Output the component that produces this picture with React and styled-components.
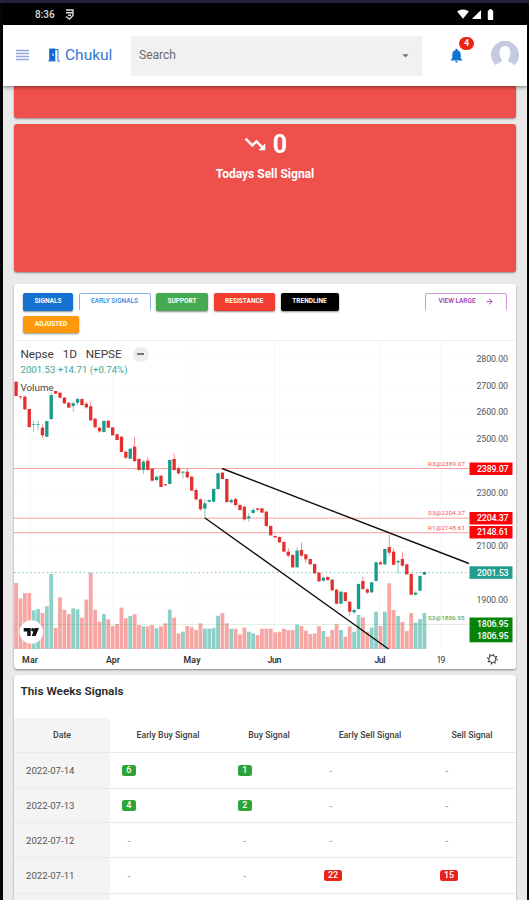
import React from "react";
import styled, { createGlobalStyle } from "styled-components";
import {
  MdTrendingDown,
  MdArrowDropDown,
  MdNotifications,
  MdSignalWifi4Bar,
  MdSignalCellular4Bar,
  MdBatteryFull,
  MdArrowForward,
} from "react-icons/md";

const GlobalStyle = createGlobalStyle`
  * {
    box-sizing: border-box;
  }
  body {
    margin: 0;
    background: #000;
    font-family: Roboto, "Liberation Sans", sans-serif;
  }
`;

const Device = styled.div`
  display: flex;
  flex-direction: column;
  height: 900px;
  width: 529px;
  padding: 0 2px 0 3px;
  overflow: hidden;
  background: #050507;
  border-top: 3px solid #242139;
`;

const StatusBar = styled.div`
  display: flex;
  flex: none;
  align-items: center;
  height: 22px;
  padding: 0 30px 0 32px;
  background: #000;
  color: #fff;
`;

const Time = styled.span`
  width: 30px;
  font-size: 10px;
  font-weight: 500;
  color: #ddd;
`;

const StatusIcons = styled.div`
  display: flex;
  align-items: center;
  gap: 2px;
  margin-left: auto;
`;

const Header = styled.header`
  position: relative;
  z-index: 1;
  display: flex;
  flex: none;
  align-items: center;
  height: 61px;
  padding-left: 13px;
  background: #fff;
  box-shadow: 0 1px 4px rgba(0, 0, 0, 0.5);
`;

const MenuIcon = styled.svg`
  flex: none;
  width: 13px;
  height: 12px;
  margin: 0 19px 2px 0;
`;

const Brand = styled.div`
  display: flex;
  align-items: center;
  gap: 5px;
  width: 80px;
  padding-bottom: 2px;
  font-size: 15.5px;
  color: #3178d8;
`;

const Search = styled.div`
  display: flex;
  align-items: center;
  justify-content: space-between;
  flex: none;
  width: 291px;
  height: 40px;
  margin-left: 3px;
  padding: 0 9px 1px 8px;
  background: #f1f1f1;
  border-radius: 2px;
  font-size: 12px;
  color: #6a6a6a;
`;

const Bell = styled.div`
  position: relative;
  height: 17px;
  margin: 0 0 1px 26px;
  color: #1273d1;
`;

const Count = styled.span`
  position: absolute;
  top: -10px;
  left: 11px;
  width: 15px;
  height: 13px;
  border-radius: 7px;
  background: #ee2114;
  color: #fff;
  font-size: 9px;
  font-weight: 700;
  line-height: 13px;
  text-align: center;
`;

const Avatar = styled.svg`
  width: 28px;
  height: 28px;
  margin: 0 0 2px 26px;
`;

const Page = styled.main`
  display: flex;
  flex-direction: column;
  flex: 1;
  min-height: 0;
  padding: 0 11px;
  background: #e9e9e9;
`;

const SignalCard = styled.section`
  flex: none;
  height: ${({ $height }) => $height}px;
  margin-bottom: ${({ $gap }) => $gap}px;
  padding-top: 8px;
  border-radius: ${({ $cut }) => ($cut ? "0 0 3px 3px" : "3px")};
  background: #ef504c;
  box-shadow: 0 1px 2px rgba(0, 0, 0, 0.4);
  color: #fff;
  text-align: center;
`;

const SignalCount = styled.div`
  display: flex;
  align-items: center;
  justify-content: center;
  gap: 6px;
  height: 24px;
  font-size: 25px;
  font-weight: 700;

  path:last-child {
    stroke: #fff;
    stroke-width: 0.6px;
  }
`;

const SignalTitle = styled.div`
  margin-top: 11px;
  font-size: 12px;
  font-weight: 700;
  line-height: 15px;
`;

const Card = styled.section`
  flex: none;
  margin-bottom: 6px;
  border-radius: 3px;
  background: #fff;
  box-shadow: 0 1px 2px rgba(0, 0, 0, 0.45);
  overflow: hidden;
`;

const Toolbar = styled.div`
  display: flex;
  justify-content: space-between;
  height: 57px;
  padding: 9px 9px 0;
  border-bottom: 1px solid #eee;
`;

const Buttons = styled.div`
  display: flex;
  flex-wrap: wrap;
  gap: 5px 5.5px;
  width: 340px;
  height: 40px;
`;

const Button = styled.button`
  display: flex;
  align-items: center;
  justify-content: center;
  gap: 9px;
  width: ${({ $width }) => $width}px;
  height: 17.5px;
  padding: 0 0 1px;
  border: none;
  border-radius: 2px;
  background: ${({ $color }) => $color};
  box-shadow: 0 1px 2px rgba(0, 0, 0, 0.45);
  color: #fff;
  font-family: inherit;
  font-size: 6.5px;
  font-weight: 700;
  white-space: nowrap;
`;

const OutlineButton = styled(Button)`
  border: 1px solid ${({ $color }) => $color};
  border-bottom-color: transparent;
  background: #fff;
  box-shadow: none;
  color: ${({ $text }) => $text};
  font-weight: 500;
`;

const ChartArea = styled.div`
  position: relative;
  height: 328px;
`;

const Chart = styled.svg`
  display: block;
  width: 502px;
  height: 328px;
  font-family: Roboto, "Liberation Sans", sans-serif;
`;

const Legend = styled.div`
  position: absolute;
  top: 5px;
  left: 6.5px;
`;

const Symbol = styled.div`
  display: flex;
  align-items: center;
  gap: 3px;
  height: 16px;
  font-size: 11.8px;
  letter-spacing: -0.1px;
  color: #3c3c3c;
`;

const Dot = styled.span`
  color: #ddd;
`;

const Pill = styled.span`
  display: flex;
  align-items: center;
  justify-content: center;
  width: 16px;
  height: 15px;
  margin-left: 8px;
  border-radius: 8px;
  background: #eceef0;

  &::before {
    content: "";
    width: 7px;
    height: 2px;
    background: #777;
  }
`;

const Change = styled.div`
  height: 17px;
  font-size: 9.6px;
  line-height: 16px;
  color: #3ba796;
`;

const Indicator = styled.div`
  font-size: 9.8px;
  line-height: 18px;
  color: #444;
`;

const TableTitle = styled.h2`
  height: 43px;
  margin: 0;
  padding: 8px 6.5px;
  font-size: 11.8px;
  font-weight: 600;
  line-height: 16px;
  color: #292929;
`;

const Table = styled.div`
  display: flex;
  flex-direction: column;
`;

const Row = styled.div`
  display: grid;
  grid-template-columns: 96px 116px 86px 116px 1fr;
  height: ${({ $height }) => $height}px;
  border-bottom: 1px solid #eaeaea;
`;

const HeadCell = styled.div`
  display: flex;
  align-items: center;
  justify-content: center;
  background: ${({ $shade }) => ($shade ? "#f4f4f4" : "#fff")};
  font-size: 8.8px;
  font-weight: 500;
  color: #404040;
`;

const Cell = styled.div`
  display: flex;
  align-items: center;
  padding-left: 12px;
  background: ${({ $shade }) => ($shade ? "#f4f4f4" : "#fff")};
  font-size: 9.6px;
  color: #555;
`;

const Chip = styled.span`
  min-width: 13.5px;
  height: 11px;
  padding: 0 4px;
  border-radius: 2.5px;
  background: ${({ $kind }) => ($kind === "buy" ? "#2da338" : "#e8231b")};
  color: #fff;
  font-size: 9px;
  font-weight: 500;
  line-height: 11px;
  text-align: center;
`;

const Dash = styled.span`
  width: 13.5px;
  text-align: center;
  color: #777;
`;

// [direction, body top, body bottom, wick top, wick bottom, volume]
// vertical values are thirds of a pixel
const candles = [
  ["r", 5, 48, 5, 48, 198], ["r", 49, 52, 49, 58, 152], ["r", 50, 88, 46, 90, 168],
  ["r", 87, 141, 87, 143, 168], ["g", 133, 135, 122, 155, 116], ["g", 133, 135, 123, 150, 120],
  ["r", 143, 166, 133, 174, 108], ["g", 123, 170, 123, 170, 128], ["g", 45, 117, 38, 120, 225],
  ["r", 33, 41, 33, 41, 63], ["r", 38, 53, 38, 56, 155], ["r", 53, 70, 51, 72, 118],
  ["r", 68, 83, 66, 84, 105], ["g", 70, 78, 65, 95, 122], ["g", 57, 68, 52, 75, 119],
  ["r", 57, 75, 55, 78, 94], ["r", 71, 82, 65, 86, 148], ["r", 79, 121, 65, 123, 229],
  ["r", 116, 142, 114, 144, 118], ["r", 143, 154, 140, 158, 82], ["g", 123, 156, 121, 158, 105],
  ["r", 122, 143, 120, 144, 89], ["r", 142, 166, 142, 166, 69], ["r", 163, 180, 160, 180, 75],
  ["r", 170, 216, 168, 216, 124], ["r", 215, 233, 212, 238, 92], ["g", 206, 236, 204, 237, 99],
  ["r", 200, 243, 170, 246, 104], ["r", 237, 270, 233, 272, 72], ["g", 245, 270, 240, 282, 68],
  ["r", 242, 270, 232, 272, 68], ["r", 266, 302, 264, 304, 72], ["g", 290, 300, 286, 304, 62],
  ["r", 287, 321, 286, 322, 68], ["r", 313, 316, 312, 317, 77], ["g", 240, 312, 238, 313, 118],
  ["r", 237, 270, 220, 272, 94], ["r", 265, 280, 260, 284, 47], ["g", 275, 278, 274, 296, 52],
  ["r", 275, 292, 265, 295, 69], ["r", 290, 332, 288, 333, 65], ["r", 330, 358, 325, 361, 57],
  ["r", 358, 388, 355, 392, 77], ["g", 370, 386, 358, 415, 61], ["g", 360, 365, 359, 366, 61],
  ["g", 327, 365, 325, 367, 63], ["g", 280, 327, 278, 329, 100], ["r", 278, 297, 276, 298, 108],
  ["r", 297, 366, 295, 368, 77], ["g", 360, 367, 355, 370, 61], ["r", 357, 375, 351, 380, 61],
  ["r", 375, 390, 370, 392, 44], ["r", 380, 418, 378, 422, 64], ["g", 409, 415, 400, 425, 52],
  ["g", 390, 399, 383, 400, 47], ["r", 385, 389, 383, 394, 42], ["r", 385, 398, 384, 399, 61],
  ["r", 395, 438, 393, 440, 61], ["r", 438, 466, 436, 467, 61], ["r", 468, 472, 466, 474, 50],
  ["r", 471, 487, 469, 488, 52], ["r", 486, 515, 484, 517, 61], ["r", 515, 527, 504, 532, 57],
  ["r", 525, 562, 523, 563, 57], ["g", 512, 562, 502, 563, 73], ["r", 510, 527, 487, 530, 69],
  ["r", 523, 538, 521, 548, 55], ["r", 537, 553, 536, 554, 45], ["r", 552, 580, 550, 582, 47],
  ["r", 578, 604, 576, 606, 68], ["g", 593, 602, 590, 605, 54], ["r", 591, 600, 589, 602, 37],
  ["r", 599, 631, 597, 633, 57], ["r", 629, 671, 627, 673, 74], ["g", 635, 671, 633, 673, 57],
  ["r", 637, 663, 635, 665, 37], ["r", 665, 695, 663, 707, 68], ["g", 690, 697, 685, 702, 52],
  ["g", 612, 687, 610, 689, 102], ["r", 603, 627, 590, 630, 95], ["r", 628, 638, 625, 641, 52],
  ["g", 607, 637, 605, 639, 64], ["g", 547, 603, 545, 605, 112], ["r", 547, 553, 544, 554, 69],
  ["g", 507, 553, 505, 555, 112], ["r", 501, 518, 465, 528, 197], ["r", 515, 554, 505, 556, 117],
  ["g", 543, 547, 540, 580, 99], ["r", 537, 557, 515, 560, 81], ["r", 553, 583, 551, 585, 54],
  ["r", 582, 644, 580, 646, 108], ["g", 638, 644, 634, 646, 79], ["g", 588, 632, 586, 634, 90],
  ["g", 576, 584, 574, 585, 108],
];

const prices = [
  ["2800.00", 359], ["2700.00", 385.5], ["2600.00", 412], ["2500.00", 439],
  ["2300.00", 492.5], ["2100.00", 546], ["1900.00", 599.5],
];

const months = [
  ["Mar", 30, 16], ["Apr", 113, 14], ["May", 192, 17], ["Jun", 274.5, 14], ["Jul", 380, 11], ["19", 441, 9],
];

const levels = [
  { y: 468.5, label: "R3@2389.07", price: "2389.07", top: 462.5 },
  { y: 518.2, label: "S3@2204.37", price: "2204.37", top: 512 },
  { y: 532.7, label: "R1@2148.61", price: "2148.61", top: 526 },
];

const rows = [
  ["2022-07-14", 6, 1, "-", "-"],
  ["2022-07-13", 4, 2, "-", "-"],
  ["2022-07-12", "-", "-", "-", "-"],
  ["2022-07-11", "-", "-", 22, 15],
];

const rowHeights = [36, 34, 35, 36];

const PriceTag = ({ top, color, text, height = 12.5 }) => (
  <g>
    <rect x="469.5" y={top} width="43" height={height} fill={color} />
    <text x="477" y={top + 9.4} fontSize="8.8" fontWeight="500" fill="#fff" textLength="31.5">
      {text}
    </text>
  </g>
);

const PriceChart = () => (
  <Chart viewBox="14 341 502 328">
    {months.map(([name, x]) => (
      <line key={name} x1={x} x2={x} y1="341" y2="649" stroke="#f7f7f7" />
    ))}
    {prices.map(([price, y]) => (
      <line key={price} x1="14" x2="472" y1={y} y2={y} stroke="#fafafa" />
    ))}
    {candles.map(([dir, , , , , volume], i) => (
      <rect
        key={i}
        x={14.2 + i * 4.39}
        y={649 - volume / 3}
        width="3.8"
        height={volume / 3}
        fill={dir === "g" ? "#8ed0c8" : "#f7a6a4"}
      />
    ))}
    {levels.map(({ y, label }) => (
      <g key={label}>
        <line x1="14" x2="470" y1={y} y2={y} stroke="#ff0000" strokeOpacity="0.38" />
        <text x="428" y={y - 3} fontSize="6.2" fill="#f0505a" textLength="37">
          {label}
        </text>
      </g>
    ))}
    <line x1="14" x2="470" y1="624.5" y2="624.5" stroke="#008000" strokeOpacity="0.12" />
    <text x="428" y="620.3" fontSize="6.2" fill="#349334" textLength="36.5">S3@1806.95</text>
    <line x1="14" x2="472" y1="572.6" y2="572.6" stroke="#26a69a" strokeOpacity="0.65" strokeDasharray="1.5 2.6" />
    {candles.map(([dir, top, bottom, high, low], i) => {
      const color = dir === "g" ? "#169a89" : "#e52e2e";
      const x = 16.1 + i * 4.39;
      return (
        <g key={i} fill={color}>
          <rect x={x - 0.4} y={380 + high / 3} width="0.8" height={(low - high) / 3} opacity="0.65" />
          <rect x={x - 1.65} y={380 + top / 3} width="3.3" height={(bottom - top) / 3} />
        </g>
      );
    })}
    <g stroke="#111" strokeWidth="1.4">
      <line x1="222" y1="468.5" x2="469" y2="563.5" />
      <line x1="205" y1="518" x2="388.5" y2="649" />
    </g>
    <rect x="469.5" y="341" width="47" height="328" fill="#fff" />
    {prices.map(([price, y]) => (
      <text key={price} x="476.5" y={y + 3.1} fontSize="8.8" fill="#555" textLength="31.5">
        {price}
      </text>
    ))}
    {levels.map(({ price, top }) => (
      <PriceTag key={price} top={top} color="#fb0308" text={price} />
    ))}
    <PriceTag top={566.3} color="#209d90" text="2001.53" />
    <PriceTag top={617.5} color="#078407" text="1806.95" />
    <PriceTag top={629.8} color="#078407" text="1806.95" />
    {months.map(([name, x, width]) => (
      <text
        key={name}
        x={x}
        y="662.6"
        fontSize="8.8"
        fontWeight={name === "19" ? 400 : 600}
        fill="#333"
        textAnchor="middle"
        textLength={width}
      >
        {name}
      </text>
    ))}
    <circle cx="31.3" cy="632" r="11.7" fill="#fff" />
    <path d="M23.7 628h7v8h-3.5v-4.6h-3.5zM34.7 628h4.2l-3.3 8h-3.8z" fill="#111" />
    <circle cx="32.8" cy="629.7" r="1.7" fill="#111" />
    <circle cx="492.3" cy="659" r="3.6" fill="none" stroke="#333" />
    <circle cx="492.3" cy="659" r="4.7" fill="none" stroke="#333" strokeWidth="1.4" strokeDasharray="1.3 2.39" />
  </Chart>
);

const App = () => {
  return (
    <Device>
      <GlobalStyle />
      <StatusBar>
        <Time>8:36</Time>
        <svg width="9" height="11" viewBox="0 0 9 11" fill="none" stroke="#ddd" strokeWidth="1.4">
          <path d="M1 1h7v5.5L4.5 10 1 7.5M1 3.7h7M3 6.2h3" />
        </svg>
        <StatusIcons>
          <MdSignalWifi4Bar size={12} />
          <MdSignalCellular4Bar size={11} />
          <MdBatteryFull size={13} />
        </StatusIcons>
      </StatusBar>
      <Header>
        <MenuIcon viewBox="0 0 13 12" stroke="#91a6df" strokeWidth="1.7">
          <path d="M0 1.5h13M0 4.5h13M0 7.5h13M0 10.5h13" />
        </MenuIcon>
        <Brand>
          <svg width="12" height="14" viewBox="0 0 11 13">
            <path d="M1 .5h5.7V12H1z" fill="#1268d0" />
            <path d="M0 12h7M6.5 1.5h2.7V12H11" fill="none" stroke="#3c80dc" />
            <path d="M4 5.3h1.2v2H4z" fill="#fff" />
          </svg>
          Chukul
        </Brand>
        <Search>
          Search
          <MdArrowDropDown size={15} color="#707070" />
        </Search>
        <Bell>
          <MdNotifications size={17} />
          <Count>4</Count>
        </Bell>
        <Avatar viewBox="0 0 28 28">
          <path
            d="M5 24.5A14 14 0 1 1 23 24.5C22 21.5 17 22 17.2 18.5C20.8 14.5 20.5 5 14 5S7.2 14.5 10.8 18.5C11 22 6 21.5 5 24.5Z"
            fill="#c4cbdf"
          />
        </Avatar>
      </Header>
      <Page>
        <SignalCard $height={32} $gap={6} $cut />
        <SignalCard $height={148} $gap={12}>
          <SignalCount>
            <MdTrendingDown size={24} strokeWidth={0} /> 0
          </SignalCount>
          <SignalTitle>Todays Sell Signal</SignalTitle>
        </SignalCard>
        <Card>
          <Toolbar>
            <Buttons>
              <Button $width={50} $color="#1473d1">SIGNALS</Button>
              <OutlineButton $width={72} $color="#8ab7ea" $text="#3d86dc">EARLY SIGNALS</OutlineButton>
              <Button $width={52} $color="#46aa50">SUPPORT</Button>
              <Button $width={61.5} $color="#f43b30">RESISTANCE</Button>
              <Button $width={58} $color="#000">TRENDLINE</Button>
              <Button $width={56} $color="#ff980b">ADJUSTED</Button>
            </Buttons>
            <OutlineButton $width={82} $color="#cf9ada" $text="#9b35ae">
              VIEW LARGE <MdArrowForward size={9} />
            </OutlineButton>
          </Toolbar>
          <ChartArea>
            <PriceChart />
            <Legend>
              <Symbol>
                Nepse <Dot>·</Dot> 1D <Dot>·</Dot> NEPSE
                <Pill />
              </Symbol>
              <Change>2001.53 +14.71 (+0.74%)</Change>
              <Indicator>Volume</Indicator>
            </Legend>
          </ChartArea>
        </Card>
        <Card>
          <TableTitle>This Weeks Signals</TableTitle>
          <Table>
            <Row $height={35}>
              <HeadCell $shade>Date</HeadCell>
              <HeadCell>Early Buy Signal</HeadCell>
              <HeadCell>Buy Signal</HeadCell>
              <HeadCell>Early Sell Signal</HeadCell>
              <HeadCell>Sell Signal</HeadCell>
            </Row>
            {rows.map(([date, ...values], index) => (
              <Row key={date} $height={rowHeights[index]}>
                <Cell $shade>{date}</Cell>
                {values.map((value, i) => (
                  <Cell key={i}>
                    {value === "-" ? <Dash>-</Dash> : <Chip $kind={i < 2 ? "buy" : "sell"}>{value}</Chip>}
                  </Cell>
                ))}
              </Row>
            ))}
            <Row $height={35}>
              <Cell $shade />
            </Row>
          </Table>
        </Card>
      </Page>
    </Device>
  );
};

export default App;
